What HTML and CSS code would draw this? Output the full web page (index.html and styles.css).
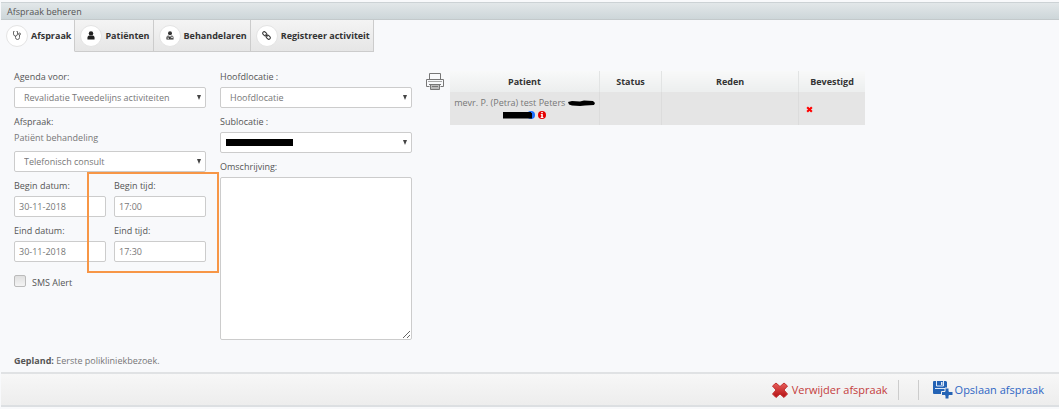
FILE: index.html
```html
<!DOCTYPE html>
<html lang="nl">
<head>
    <meta charset="UTF-8">
    <meta name="viewport" content="width=device-width, initial-scale=1.0">
    <title>Afspraak beheren</title>
    <link rel="stylesheet" href="styles.css">
</head>
<body>
    <div class="window">
        <h1 class="titlebar">Afspraak beheren</h1>

        <nav class="tabs">
            <button type="button" class="tab active">
                <span class="tab-icon">
                    <svg width="8" height="9" viewBox="0 0 16 18" fill="none" stroke="#444" stroke-width="1.6"><path d="M3 1H1v5a4 4 0 0 0 8 0V1H7M5 10v3a4 4 0 0 0 8 0V8"/><circle cx="13" cy="6" r="2"/></svg>
                </span>
                Afspraak
            </button>
            <button type="button" class="tab">
                <span class="tab-icon">
                    <svg width="8" height="9" viewBox="0 0 16 18" fill="#222"><circle cx="8" cy="5" r="4.5"/><path d="M1 17c-1-5 1-8 4-8q3 2 6 0c3 0 5 3 4 8z"/></svg>
                </span>
                Patiënten
            </button>
            <button type="button" class="tab">
                <span class="tab-icon">
                    <svg width="8" height="9" viewBox="0 0 16 18"><circle cx="8" cy="4.500" r="4" fill="#333"/><path d="M1 17c-1-5 1-8 4-8l3 3 3-3c3 0 5 3 4 8z" fill="#333"/><path d="M4 10v4M3 15h3M12 10v3M10 15v-2h4v2" fill="none" stroke="#fff" stroke-width="1.3"/></svg>
                </span>
                Behandelaren
            </button>
            <button type="button" class="tab">
                <span class="tab-icon">
                    <svg width="9" height="9" viewBox="0 0 18 18" fill="none" stroke="#333" stroke-width="2"><rect x="1" y="2.500" width="9" height="6" rx="3" transform="rotate(45 5.500 5.500)"/><rect x="8" y="9.500" width="9" height="6" rx="3" transform="rotate(45 12.500 12.500)"/><path d="M7 7l4 4"/></svg>
                </span>
                Registreer activiteit
            </button>
        </nav>

        <main class="content">
            <form class="form" id="appointmentForm">
                <div class="column">
                    <div class="field">
                        <label for="agenda">Agenda voor:</label>
                        <select id="agenda"><option>Revalidatie Tweedelijns activiteiten</option></select>
                    </div>
                    <div class="field">
                        <label for="type">Afspraak:</label>
                        <p class="subtext">Patiënt behandeling</p>
                        <select id="type"><option>Telefonisch consult</option></select>
                    </div>
                    <div class="dates">
                        <div class="group">
                            <div class="field">
                                <label for="startDate">Begin datum:</label>
                                <input type="text" id="startDate" value="30-11-2018">
                            </div>
                            <div class="field">
                                <label for="endDate">Eind datum:</label>
                                <input type="text" id="endDate" value="30-11-2018">
                            </div>
                        </div>
                        <div class="group times">
                            <div class="field">
                                <label for="startTime">Begin tijd:</label>
                                <input type="text" id="startTime" value="17:00">
                            </div>
                            <div class="field">
                                <label for="endTime">Eind tijd:</label>
                                <input type="text" id="endTime" value="17:30">
                            </div>
                        </div>
                    </div>
                    <div class="check">
                        <input type="checkbox" id="sms">
                        <label for="sms">SMS Alert</label>
                    </div>
                </div>

                <div class="column">
                    <div class="field">
                        <label for="location">Hoofdlocatie :</label>
                        <select id="location"><option>Hoofdlocatie</option></select>
                    </div>
                    <div class="field masked">
                        <label for="sublocation">Sublocatie :</label>
                        <select id="sublocation"><option></option></select>
                    </div>
                    <div class="field">
                        <label for="description">Omschrijving:</label>
                        <textarea id="description"></textarea>
                    </div>
                </div>
            </form>

            <button type="button" class="print" aria-label="Afdrukken">
                <svg width="18" height="17" viewBox="0 0 18 17" fill="none" stroke="#777"><path d="M3.500 6V.5h11V6M3.500 13.500h-3v-7h17v7h-3"/><path d="M2 8.500h14" stroke="#aaa"/><path d="M4.500 11.500h9v5h-9z" fill="#bbb"/><path d="M6 13.500h6M3 11.500h12"/></svg>
            </button>

            <table class="patients">
                <thead>
                    <tr>
                        <th class="col-patient">Patient</th>
                        <th class="col-status">Status</th>
                        <th class="col-reason">Reden</th>
                        <th class="col-confirmed">Bevestigd</th>
                    </tr>
                </thead>
                <tbody>
                    <tr>
                        <td>
                            mevr. P. (Petra) test Peters
                            <svg class="mark" width="27" height="7" viewBox="0 0 27 7"><path d="M0 2l4-1 8 .5 4-1 9 .5 2 2-1 2-9 .5-5 .5-8-.5-3-1z"/></svg><br>
                            <svg class="mark" width="32" height="8" viewBox="0 0 32 8"><circle cx="28" cy="4" r="4" fill="#1a6dff"/><path d="M0 1h28v1h1v5.500H0z"/></svg>
                            <svg class="mark" width="8" height="8" viewBox="0 0 8 8"><circle cx="4" cy="4" r="4" fill="#e60000"/><path d="M3.200 1h1.600v1.300H3.200zM2.800 3h2v3h.6v1H2.700V6h.6V4h-.5z" fill="#fff"/></svg>
                        </td>
                        <td></td>
                        <td></td>
                        <td class="confirmed">
                            <svg class="mark" width="7" height="7" viewBox="0 0 6 6"><path d="M1 1l4 4M5 1L1 5" stroke="#f00" stroke-width="1.8"/></svg>
                        </td>
                    </tr>
                </tbody>
            </table>

            <p class="planned"><strong>Gepland:</strong> Eerste polikliniekbezoek.</p>
        </main>

        <footer class="actions">
            <button type="button" class="action delete">
                <svg width="16" height="16" viewBox="0 0 16 16"><defs><linearGradient id="red" x2="0" y2="1"><stop stop-color="#e8605c"/><stop offset="1" stop-color="#b30f12"/></linearGradient></defs><path d="M4 1l4 3.500L12 1l3.500 3L12 8l3.500 4-3.500 3.500L8 12l-4 3.500L.5 12 4 8 .5 4z" fill="url(#red)" stroke="#c23030" stroke-linejoin="round"/></svg>
                Verwijder afspraak
            </button>
            <span class="divider"></span>
            <button type="button" class="action save">
                <svg width="20" height="18" viewBox="0 0 20 18"><path d="M1 0h12l1 1v12H1q-1 0-1-1V1q0-1 1-1z" fill="#2463b5"/><path d="M3.500 0v5h7V0M2 7.500h10" fill="none" stroke="#dfe9f6"/><path d="M8 1h1.500v3H8z" fill="#dfe9f6"/><path d="M12 7h4v3.500h4v4h-4V18h-4v-3.500H8.500v-4H12z" fill="#2463b5" stroke="#f1f1f1"/></svg>
                Opslaan afspraak
            </button>
        </footer>
    </div>
</body>
</html>
```
FILE: styles.css
```css
/* General Styles */
* {
    box-sizing: border-box;
}

body {
    margin: 0;
    padding: 2px 0 3px 1px;
    background-color: #f8f9fb;
    font-family: "Open Sans", sans-serif;
    font-size: 9px;
    line-height: 15px;
    color: #555;
}

p {
    margin: 0;
}

button,
input,
select,
textarea {
    font: inherit;
    color: #777;
}

button {
    cursor: pointer;
}

.window {
    border-top: 1px solid #ccd2d5;
    border-bottom: 2px solid #dcdfe2;
}

.titlebar {
    margin: 0;
    padding: 1px 6px 0;
    border-bottom: 1px solid #c3c9cb;
    background: linear-gradient(#e2e7e9, #cdd6d9);
    font-size: 9px;
    font-weight: normal;
    line-height: 15px;
}

/* Tabs */
.tabs {
    display: flex;
}

.tab {
    display: flex;
    align-items: center;
    gap: 3px;
    height: 32px;
    padding: 0 3px 0 5px;
    border: 0;
    border-right: 1px solid #ccc;
    border-bottom: 1px solid #ccc;
    background: linear-gradient(#f4f4f4, #e6e6e6);
    color: #333;
    font-weight: bold;
}

.tab.active {
    background: #f8f9fb;
    border-bottom-color: transparent;
}

.tab-icon {
    display: flex;
    align-items: center;
    justify-content: center;
    width: 22px;
    height: 22px;
    border: 1px solid #e4e4e4;
    border-radius: 50%;
    background-color: #fff;
}

/* Content */
.content {
    display: grid;
    grid-template-columns: 398px 26px minmax(0, 415px);
    column-gap: 6px;
    padding: 17px 14px 4px 13px;
}

.form {
    display: grid;
    grid-template-columns: 1fr 1fr;
    gap: 14px;
}

.field {
    margin-bottom: 6px;
}

.field label {
    display: block;
    margin-bottom: 3px;
}

.subtext {
    margin: -2px 0 6px;
    color: #777;
}

input[type="text"],
select,
textarea {
    display: block;
    width: 100%;
    height: 21px;
    padding: 0 4px;
    border: 1px solid #ccc;
    border-radius: 2px;
    background-color: #fff;
}

select {
    appearance: none;
    padding: 0 9px;
    background-image: url("data:image/svg+xml,%3Csvg xmlns='http://www.w3.org/2000/svg' width='4' height='5'%3E%3Cpath d='M0 0h4L2 5z' fill='%23444'/%3E%3C/svg%3E");
    background-repeat: no-repeat;
    background-position: right 4px center;
}

textarea {
    height: 163px;
    resize: both;
}

.dates {
    display: grid;
    grid-template-columns: 1fr 1fr;
    gap: 8px;
}

/* Highlight around the time fields */
.times {
    position: relative;
}

.times::after {
    content: "";
    position: absolute;
    inset: -6px -13px -5px -27px;
    border: 2px solid #f79646;
    pointer-events: none;
}

/* Hidden value of the sublocation */
.masked {
    position: relative;
}

.masked::after {
    content: "";
    position: absolute;
    left: 6px;
    bottom: 7px;
    width: 67px;
    height: 7px;
    background-color: #000;
}

.check {
    display: flex;
    gap: 6px;
    margin-top: 7px;
}

.check input {
    appearance: none;
    width: 12px;
    height: 12px;
    margin: 0;
    border: 1px solid #bbb;
    border-radius: 2px;
    background: linear-gradient(#e0e0e0, #f4f4f4);
}

.print {
    align-self: start;
    justify-self: end;
    margin-top: 4px;
    padding: 0;
    border: 0;
    background: none;
}

.print svg {
    display: block;
}

/* Patients table */
.patients {
    align-self: start;
    width: 100%;
    margin-top: 2px;
    border-collapse: collapse;
    table-layout: fixed;
    line-height: 12px;
    text-align: center;
}

.patients th {
    height: 21px;
    padding: 0;
    border-right: 1px solid #e2e4e4;
    background: linear-gradient(#f8f9f9, #eceeee);
    color: #333;
}

.patients td {
    height: 33px;
    padding: 0 4px;
    border-right: 1px solid #dcdcdc;
    background-color: #e5e5e5;
    color: #777;
}

.patients th:last-child,
.patients td:last-child {
    border-right: 0;
}

.col-patient {
    width: 36%;
}

.col-status {
    width: 15%;
}

.col-reason {
    width: 33%;
}

.col-confirmed {
    width: 16%;
}

.patients .confirmed {
    padding-left: 7px;
    text-align: left;
}

.mark {
    vertical-align: middle;
}

.planned {
    grid-column: 1 / -1;
    margin-top: 7px;
    color: #777;
}

.planned strong {
    color: #555;
}

/* Footer */
.actions {
    display: flex;
    align-items: center;
    justify-content: flex-end;
    gap: 10px;
    height: 33px;
    padding-right: 15px;
    border-top: 2px solid #e0e2e4;
    background: linear-gradient(#f7f7f7, #ededed);
}

.action {
    display: flex;
    align-items: center;
    gap: 4px;
    padding: 0;
    border: 0;
    background: none;
    font-size: 11px;
}

.delete {
    color: #c43c3c;
}

.save {
    gap: 2px;
    color: #2f66c4;
}

.divider {
    width: 21px;
    height: 20px;
    margin-right: 4px;
    border: solid #ccc;
    border-width: 0 1px;
}
```
